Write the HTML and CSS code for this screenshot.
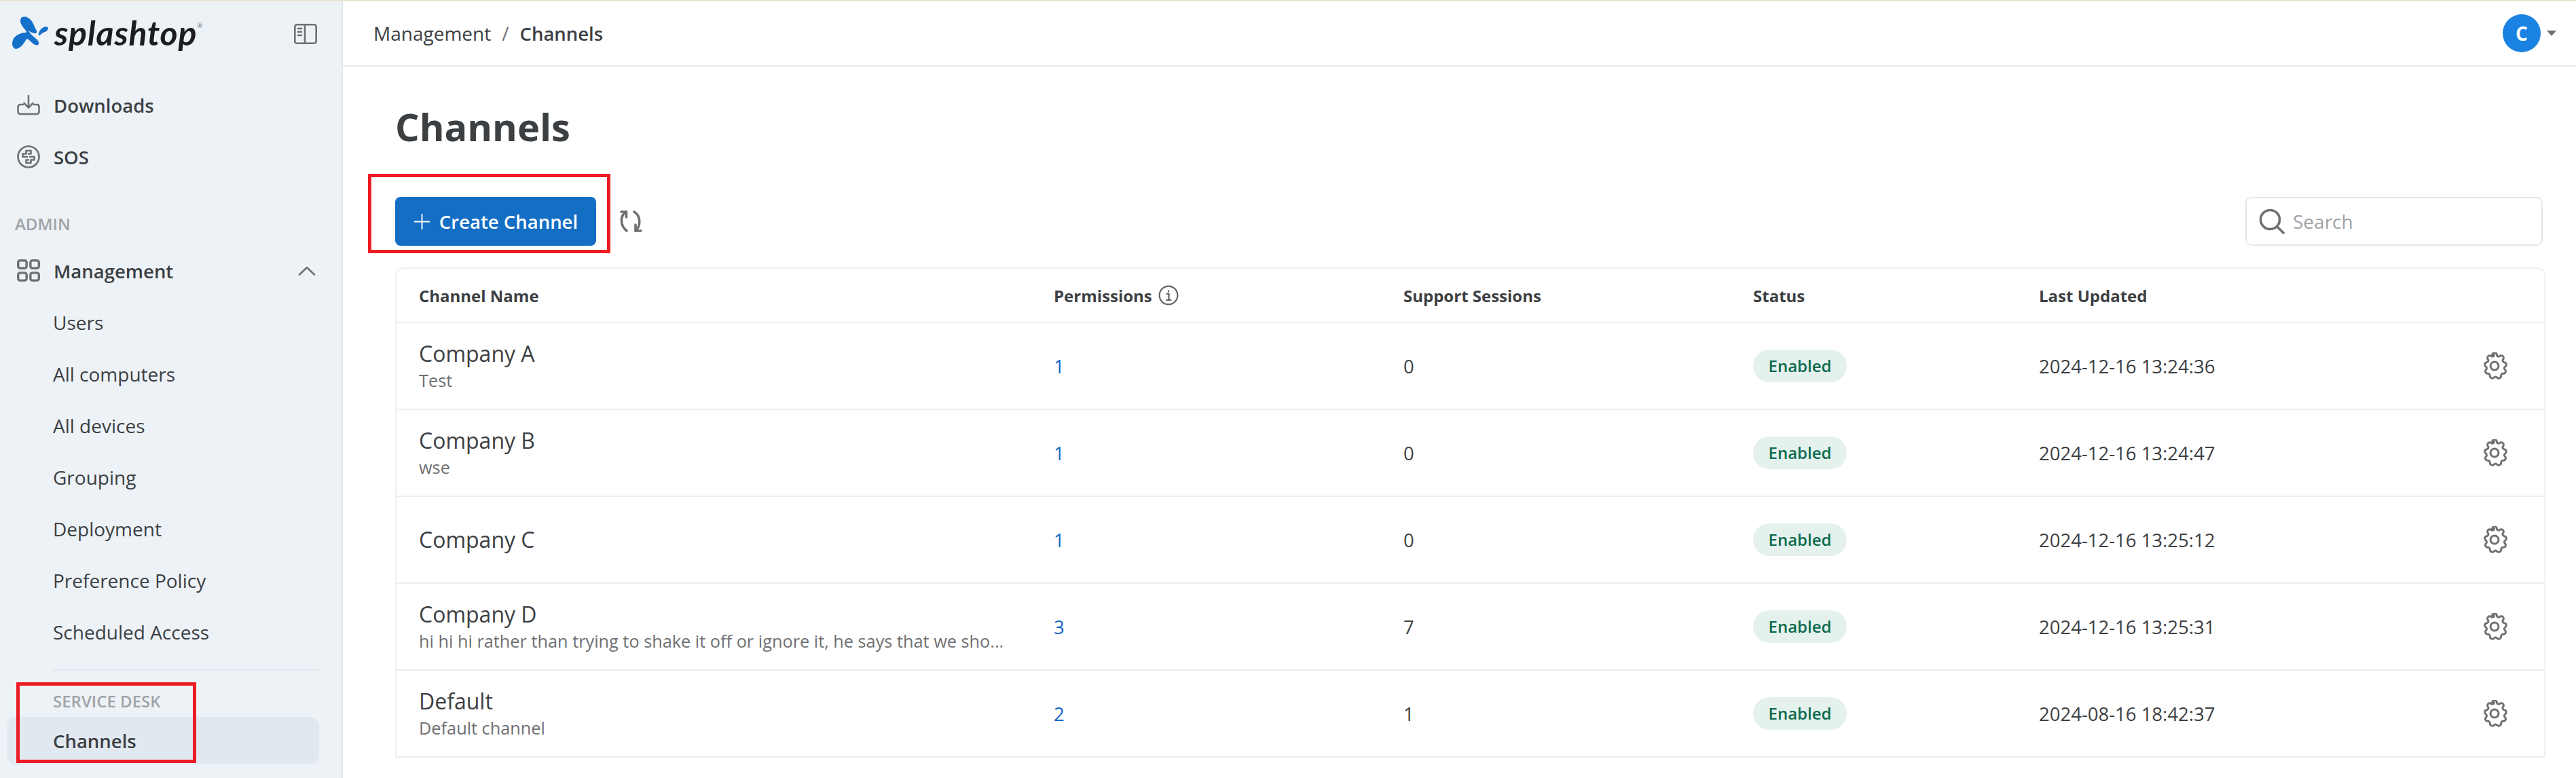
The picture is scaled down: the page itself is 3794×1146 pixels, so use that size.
FILE: index.html
```html
<!DOCTYPE html>
<html lang="en">
<head>
<meta charset="utf-8">
<title>Channels</title>
<link rel="stylesheet" href="styles.css">
</head>
<body>
<div class="topline"></div>
<div class="app">
  <aside class="sidebar">
    <div class="brand">
      <svg class="logo-mark" viewBox="0 0 54 48"><path fill="#1570c9" d="M14 1.500C18 -1 24 1 28 6C32 11 33 17 36 21C37 24 35 26 32 25C28 24 25 22 23 20C26 25 30 29 35 33C39 36 41 41 37 42.500C33 43 29 39 25 35C23 33 21 33 20 35C17 41 11 48 5 48C0 47 -1 40 1 35C4 28 12 24 20 24C21 24 21 22 20 21C17 17 12 12 12 7C12 4 13 2.500 14 1.500Z"/><path fill="#1570c9" d="M52 16C54 18 52 22 48 23C45 24 42 26 41 28C39 29 38 27 39 25C40 21 44 16 48 15.500C50 15 51 15 52 16Z"/></svg>
      <span class="logo-text">splashtop<sup class="logo-reg">®</sup></span>
      <svg class="toggle" viewBox="0 0 34 30" fill="none" stroke="#6f7072" stroke-width="2.600"><rect x="1.300" y="1.300" width="31.400" height="27.400" rx="3"/><path d="M16 1.300V28.700"/><path d="M6 7h5M6 12h5M6 17h5" stroke-linecap="round"/></svg>
    </div>
    <nav class="nav">
      <a class="item strong"><svg class="ico" viewBox="0 0 34 30" fill="none" stroke="#6f7072" stroke-width="2.600" stroke-linecap="round" stroke-linejoin="round"><path d="M17 1v17M10.500 12l6.500 6.500 6.500-6.500"/><path d="M9 14H4.500C2.500 14 1.500 16 1.500 18v6c0 2.500 1.500 4 4 4h23c2.500 0 4-1.500 4-4v-6c0-2-1-4-3-4H25"/></svg><span>Downloads</span></a>
      <a class="item strong"><svg class="ico" viewBox="0 0 34 34" fill="none" stroke="#6f7072" stroke-width="2.600" stroke-linejoin="round" stroke-linecap="round"><circle cx="17" cy="17" r="15.500"/><path d="M15 17H8.500v-4.500h5V8h7v4.500h-3.500"/><path d="M19 17h6.500v4.500h-5V26h-7v-4.500h3.500"/></svg><span>SOS</span></a>
      <div class="section">ADMIN</div>
      <a class="item strong"><svg class="ico" viewBox="0 0 30 30" fill="none" stroke="#6f7072" stroke-width="3"><rect x="1.500" y="1.500" width="11" height="10" rx="2.500"/><rect x="17.500" y="1.500" width="11" height="10" rx="2.500"/><rect x="1.500" y="17.500" width="11" height="10" rx="2.500"/><rect x="17.500" y="17.500" width="11" height="10" rx="2.500"/></svg><span class="grow">Management</span><svg class="chev" viewBox="0 0 26 14" fill="none" stroke="#6f7072" stroke-width="2.600" stroke-linecap="round" stroke-linejoin="round"><path d="M2 12.500L13 2l11 10.500"/></svg></a>
      <a class="item sub">Users</a>
      <a class="item sub">All computers</a>
      <a class="item sub">All devices</a>
      <a class="item sub">Grouping</a>
      <a class="item sub">Deployment</a>
      <a class="item sub">Preference Policy</a>
      <a class="item sub">Scheduled Access</a>
      <div class="divider"></div>
      <div class="subsection">SERVICE DESK</div>
      <a class="item sub active">Channels</a>
    </nav>
    <div class="mark mark-side"></div>
  </aside>
  <main class="main">
    <header class="topbar">
      <div class="crumbs"><span>Management</span><span class="sep">/</span><b>Channels</b></div>
      <div class="user"><span class="avatar">C</span><span class="caret"></span></div>
    </header>
    <section class="content">
      <h1 class="title">Channels</h1>
      <div class="toolbar">
        <button class="btn"><svg class="plus" viewBox="0 0 26 26" fill="none" stroke="#fff" stroke-width="2"><path d="M13 1v24M1 13h24"/></svg>Create Channel</button>
        <svg class="refresh" viewBox="0 0 34 34" fill="none" stroke="#6f7072" stroke-width="3.600" stroke-linecap="round" stroke-linejoin="round"><path d="M10 3C1 9 1 23 11 31"/><path d="M3 3h7.500v8"/><path d="M22 3c10 6 10 21 2 28"/><path d="M32 31h-8v-9"/></svg>
        <label class="search"><svg class="search-ico" viewBox="0 0 38 38" fill="none" stroke="#6f7072" stroke-width="3.600" stroke-linecap="round"><circle cx="16.500" cy="16.500" r="14"/><path d="M27 27l9 9"/></svg><span>Search</span></label>
      </div>
      <div class="table">
        <div class="row head"><div>Channel Name</div><div class="perm">Permissions<svg class="info" viewBox="0 0 28 28" fill="none" stroke="#5f6062" stroke-width="2"><circle cx="14" cy="14" r="12.500"/><path d="M11 12h3.500v8M10.500 20.500h7.500M14 7v2.500"/></svg></div><div>Support Sessions</div><div>Status</div><div>Last Updated</div><div></div></div>

        <div class="row"><div class="name"><div class="nm">Company A</div><div class="desc">Test</div></div><div class="link">1</div><div>0</div><div><span class="pill">Enabled</span></div><div>2024-12-16 13:24:36</div><div class="act"><svg class="gear" viewBox="0 0 40 40" fill="none" stroke="#6f7072" stroke-width="3" stroke-linejoin="round"><use href="#g"/></svg></div></div>
        <div class="row"><div class="name"><div class="nm">Company B</div><div class="desc">wse</div></div><div class="link">1</div><div>0</div><div><span class="pill">Enabled</span></div><div>2024-12-16 13:24:47</div><div class="act"><svg class="gear" viewBox="0 0 40 40" fill="none" stroke="#6f7072" stroke-width="3" stroke-linejoin="round"><use href="#g"/></svg></div></div>
        <div class="row"><div class="name"><div class="nm">Company C</div></div><div class="link">1</div><div>0</div><div><span class="pill">Enabled</span></div><div>2024-12-16 13:25:12</div><div class="act"><svg class="gear" viewBox="0 0 40 40" fill="none" stroke="#6f7072" stroke-width="3" stroke-linejoin="round"><use href="#g"/></svg></div></div>
        <div class="row"><div class="name"><div class="nm">Company D</div><div class="desc">hi hi hi rather than trying to shake it off or ignore it, he says that we sho...</div></div><div class="link">3</div><div>7</div><div><span class="pill">Enabled</span></div><div>2024-12-16 13:25:31</div><div class="act"><svg class="gear" viewBox="0 0 40 40" fill="none" stroke="#6f7072" stroke-width="3" stroke-linejoin="round"><use href="#g"/></svg></div></div>
        <div class="row"><div class="name"><div class="nm">Default</div><div class="desc">Default channel</div></div><div class="link">2</div><div>1</div><div><span class="pill">Enabled</span></div><div>2024-08-16 18:42:37</div><div class="act"><svg class="gear" viewBox="0 0 40 40" fill="none" stroke="#6f7072" stroke-width="3" stroke-linejoin="round"><use href="#g"/></svg></div></div>
      </div>
    </section>
    <div class="mark mark-main"></div>
  </main>
</div>
<svg class="defs" width="0" height="0"><defs><g id="g"><circle cx="20" cy="20" r="6"/><path d="M16.500 3.500a3.500 3.500 0 0 1 7 0c.3 2 2.500 3 4.200 1.900a3.500 3.500 0 0 1 5 5c-1.100 1.700-.1 3.900 1.900 4.200a3.500 3.500 0 0 1 1.800 6.300c-1.800.9-2.100 3.300-.6 4.700a3.500 3.500 0 0 1-2.400 6c-2.100-.2-3.800 1.500-3.500 3.600a3.500 3.500 0 0 1-6 2.400c-1.400-1.500-3.400-1.500-4.800 0a3.500 3.500 0 0 1-6-2.400c.3-2.100-1.400-3.800-3.500-3.600a3.500 3.500 0 0 1-2.400-6c1.500-1.400 1.200-3.800-.6-4.700a3.500 3.500 0 0 1 1.800-6.300c2-.3 3-2.500 1.900-4.200a3.500 3.500 0 0 1 5-5c1.700 1.100 3.900.1 4.200-1.900z" transform="translate(.5 .5) scale(.975)"/></g></defs></svg>
</body>
</html>
```
FILE: styles.css
```css
* { box-sizing: border-box; }
html, body { margin: 0; height: 1146px; overflow: hidden; background: #fff; }
body { font-family: "Open Sans", "Liberation Sans", sans-serif; color: #3c4043; font-size: 28px; }
.topline { height: 2px; background: #eae3d2; }
.app { display: flex; height: 1144px; }
.defs { position: absolute; }

.sidebar { position: relative; width: 505px; flex: none; background: #edf2f7; border-right: 2px solid #e2e8ef; }
.brand { height: 115px; display: flex; align-items: flex-start; padding: 22px 36px 0 18px; }
.logo-mark { width: 54px; height: 48px; flex: none; }
.logo-text { margin: 1px 0 0 8px; font-family: Lato, sans-serif; font-weight: 700; font-style: italic; font-size: 50px; line-height: 46px; color: #1d1d1f; flex: 1; letter-spacing: .8px; }
.logo-reg { font-size: 10px; font-style: normal; font-weight: 400; vertical-align: 26px; line-height: 0; color: #777; letter-spacing: 0; }
.toggle { width: 34px; height: 30px; margin-top: 11px; flex: none; }

.nav { padding: 0 33px 0 10px; display: flex; flex-direction: column; }
.item { display: flex; align-items: center; height: 76px; padding-left: 15px; }
.ico { width: 34px; height: 34px; flex: none; margin-right: 20px; }
.strong { font-weight: 600; font-size: 27.500px; }
.grow { flex: 1; }
.chev { width: 26px; height: 14px; margin-right: 5px; }
.section { height: 92px; padding: 45px 0 0 12px; color: #a0a3a6; font-weight: 600; font-size: 24px; line-height: 32px; }
.sub { padding-left: 68px; }
.divider { height: 2px; background: #e2e8ef; margin: 17px 0 0 68px; }
.subsection { height: 68px; padding: 29px 0 0 68px; color: #a0a3a6; font-weight: 600; font-size: 24px; line-height: 32px; }
.active { height: 70px; background: #e2e8f0; border-radius: 14px; font-weight: 600; font-size: 27.500px; }

.mark { position: absolute; border: 5px solid #ed1c24; pointer-events: none; }
.mark-side { left: 24px; top: 1003px; width: 265px; height: 119px; }
.mark-main { left: 37px; top: 254px; width: 357px; height: 117px; }

.main { position: relative; flex: 1; min-width: 0; }
.topbar { height: 96px; border-bottom: 2px solid #e2e8ef; display: flex; align-items: center; justify-content: space-between; padding: 0 29px 0 45px; }
.crumbs { display: flex; align-items: center; }
.sep { margin: 0 16px; color: #6f7072; }
.crumbs b { font-weight: 600; font-size: 27.500px; }
.user { display: flex; align-items: center; }
.avatar { width: 56px; height: 56px; border-radius: 50%; background: #1a82e2; color: #fff; font-weight: 700; font-size: 28px; display: flex; align-items: center; justify-content: center; }
.caret { margin-left: 9px; border: 7px solid transparent; border-top: 8px solid #6f7072; border-bottom: 0; }

.content { padding: 0 45px 0 77px; }
.title { margin: 0; font-size: 56px; font-weight: 700; line-height: 80px; padding-top: 48px; height: 192px; }
.toolbar { display: flex; align-items: center; height: 72px; }
.btn { height: 72px; width: 296px; border: 0; border-radius: 8px; background: #146ec4; color: #fff; font: 600 27.500px "Open Sans", sans-serif; display: flex; align-items: center; justify-content: center; gap: 13px; padding: 0; }
.plus { width: 25px; height: 25px; flex: none; }
.refresh { width: 34px; height: 34px; margin-left: 34px; }
.search { margin-left: auto; margin-right: 4px; width: 438px; height: 72px; border: 2px solid #e2e8ef; border-radius: 9px; display: flex; align-items: center; padding-left: 18px; color: #a0a3a6; }
.search-ico { width: 38px; height: 38px; margin-right: 12px; flex: none; }

.table { margin-top: 32px; border: 2px solid #eef1f5; border-bottom: 0; border-radius: 12px 12px 0 0; }
.row { display: grid; grid-template-columns: 935px 515px 515px 421px 1fr 100px; height: 128px; align-items: center; padding-left: 33px; border-bottom: 2px solid #e9eef3; font-size: 27.500px; }
.head { height: 80px; font-weight: 700; font-size: 24px; color: #3c4043; }
.perm { display: flex; align-items: center; gap: 9px; }
.info { width: 30px; height: 30px; }
.nm { font-size: 32px; font-weight: 500; line-height: 42px; }
.desc { font-size: 25.300px; line-height: 36px; color: #6f7072; white-space: nowrap; }
.link { color: #1469c7; }
.pill { display: block; width: 138px; height: 48px; border-radius: 24px; background: #e4f1ed; color: #0d6b4c; font-size: 24px; font-weight: 600; line-height: 48px; text-align: center; }
.act { display: flex; justify-content: flex-end; padding-right: 53px; }
.gear { width: 40px; height: 40px; display: block; }
```
